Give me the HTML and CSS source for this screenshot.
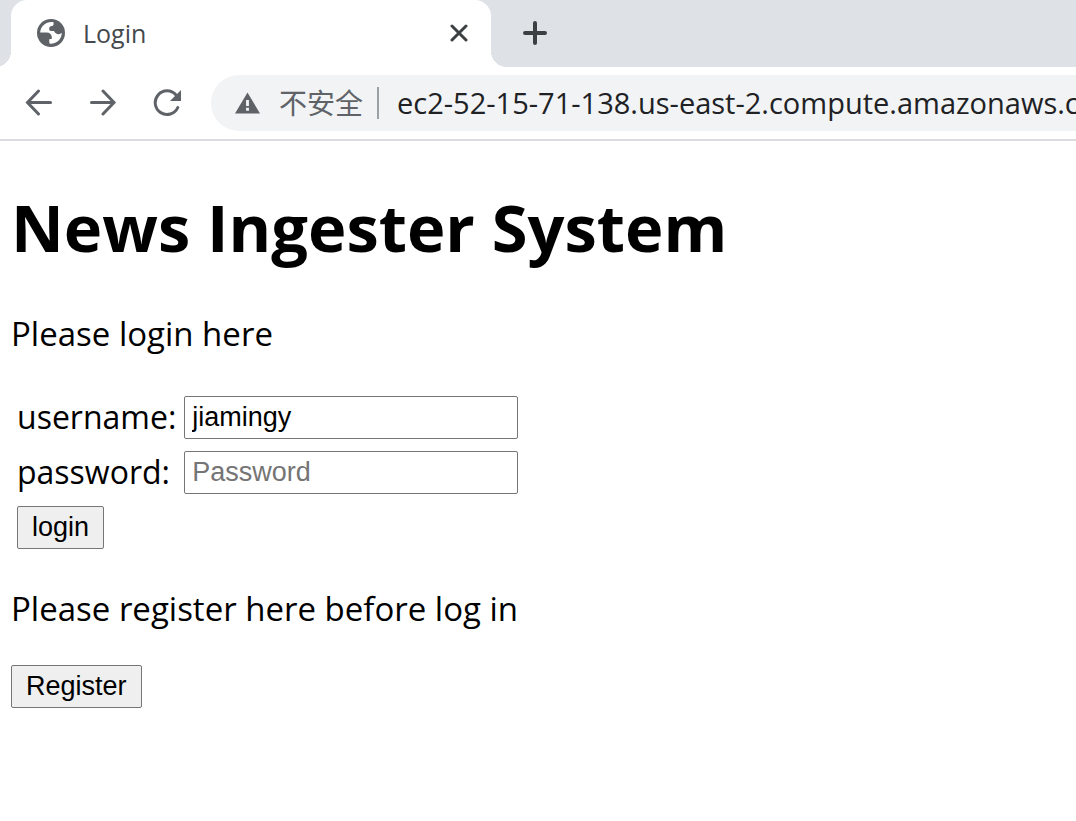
FILE: index.html
```html
<!DOCTYPE html>
<html lang="en">
<head>
<meta charset="utf-8">
<title>Login</title>
<link rel="stylesheet" href="styles.css">
</head>
<body>
<header class="browser">
  <div class="tab-strip">
    <div class="tab">
      <svg class="globe" viewBox="0 0 28 28" aria-hidden="true"><circle cx="14" cy="14" r="14" fill="#5f6368"/><path fill="#fff" d="M16.500 3.200C10 2 3.500 6.500 3.200 13.500H9.500c3.500 0 5.300 2 5.300 5v1.500h-2.300c-.6 2-.2 3.400.3 4.800 7 .5 12-5 12-11-1 1.300-2.800 1.700-4.500 1.200-1.800-.5-2.600-1.600-3.300-3h-3c-1.500 0-2-1-1.800-2.400.1-1.600.8-2.600 2.800-2.600 1.500 0 1.800-1.500 1.500-3.800z"/></svg>
      <span class="tab-title">Login</span>
      <button class="icon-button" aria-label="Close tab"><svg class="close" viewBox="0 0 18 18"><path d="M2 2l14 14M16 2L2 16"/></svg></button>
    </div>
    <button class="icon-button new-tab" aria-label="New tab"><svg class="plus" viewBox="0 0 24 24"><path d="M12 2v20M2 12h20"/></svg></button>
  </div>
  <div class="toolbar">
    <nav class="nav">
      <button class="icon-button" aria-label="Back"><svg class="nav-icon" viewBox="0 0 28 28"><path d="M25.500 13.500H3M13.500 2L2.500 13.500 13.500 25"/></svg></button>
      <button class="icon-button" aria-label="Forward"><svg class="nav-icon" viewBox="0 0 28 28"><path d="M2.500 13.500h22M14 2l11 11.500L14 25"/></svg></button>
      <button class="icon-button" aria-label="Reload"><svg class="nav-icon" viewBox="0 0 28 28"><path d="M23 6A11.800 11.800 0 1 0 24.800 18.500"/><path class="solid" d="M28 1v11H17z"/></svg></button>
    </nav>
    <div class="address">
      <svg class="warning" viewBox="0 0 26 22" aria-hidden="true"><path fill="#5f6368" d="M13 0l13 22H0z"/><path fill="#f1f3f4" d="M11.500 8h3v6h-3zM11.500 16h3v3h-3z"/></svg>
      <span class="security">不安全</span>
      <span class="divider"></span>
      <span class="url">ec2-52-15-71-138.us-east-2.compute.amazonaws.com</span>
    </div>
  </div>
</header>
<main class="page">
  <h1 class="heading">News Ingester System</h1>
  <p class="text">Please login here</p>
  <form class="login">
    <label class="label" for="username">username:</label>
    <input class="field" id="username" type="text" value="jiamingy">
    <label class="label" for="password">password:</label>
    <input class="field" id="password" type="password" placeholder="Password">
    <button class="button" type="button">login</button>
  </form>
  <p class="text">Please register here before log in</p>
  <button class="button" type="button">Register</button>
</main>
</body>
</html>
```
FILE: styles.css
```css
* { box-sizing: border-box; }

body {
  margin: 0;
  background: #fff;
  color: #000;
  font-family: "Open Sans", "Noto Sans CJK SC", sans-serif;
}

.browser {
  border-bottom: 2px solid #dadce0;
  overflow: hidden;
}

.tab-strip {
  display: flex;
  height: 67px;
  padding-left: 11px;
  background: #dee1e6;
}

.tab {
  position: relative;
  display: flex;
  align-items: center;
  width: 480px;
  padding: 0 23px 2px 26px;
  border-radius: 16px 16px 0 0;
  background: #fff;
}

.tab::before,
.tab::after {
  content: "";
  position: absolute;
  bottom: 0;
  width: 16px;
  height: 16px;
}

.tab::before {
  right: 100%;
  background: radial-gradient(circle at 0 0, transparent 16px, #fff 16px);
}

.tab::after {
  left: 100%;
  background: radial-gradient(circle at 100% 0, transparent 16px, #fff 16px);
}

.globe {
  width: 28px;
  height: 28px;
}

.tab-title {
  flex: 1;
  margin-left: 18px;
  color: #45494d;
  font-size: 25px;
}

.icon-button {
  display: flex;
  align-items: center;
  padding: 0;
  border: 0;
  background: none;
}

.icon-button svg {
  fill: none;
  stroke: #5f6368;
  stroke-width: 3;
  stroke-linecap: round;
}

.icon-button .close {
  width: 18px;
  height: 18px;
  stroke: #3c4043;
}

.new-tab {
  margin-left: 32px;
  padding-bottom: 2px;
}

.icon-button .plus {
  width: 24px;
  height: 24px;
  stroke: #3c4043;
  stroke-width: 4;
}

.toolbar {
  display: flex;
  align-items: center;
  padding: 8px 0 8px 25px;
}

.nav {
  display: flex;
  gap: 36px;
  margin-right: 30px;
}

.nav-icon {
  width: 28px;
  height: 28px;
}

.icon-button .solid {
  fill: #5f6368;
  stroke: none;
}

.address {
  display: flex;
  flex: 1;
  align-items: center;
  min-width: 0;
  height: 56px;
  padding-left: 24px;
  overflow: hidden;
  border-radius: 28px 0 0 28px;
  background: #f1f3f4;
  font-size: 28px;
  white-space: nowrap;
}

.warning {
  flex: none;
  width: 25px;
  height: 22px;
}

.security,
.url {
  padding-bottom: 2px;
}

.security {
  margin-left: 19px;
  color: #5f6368;
}

.divider {
  flex: none;
  width: 2px;
  height: 32px;
  margin: 0 18px 0 14px;
  background: #9aa0a6;
}

.url {
  color: #202124;
  font-size: 29px;
}

.page {
  padding: 42px 11px;
}

.heading {
  margin: 0 0 41px;
  font-size: 65px;
  font-weight: 700;
  line-height: 88px;
}

.text {
  margin: 0 0 34px;
  font-size: 33px;
  line-height: 44px;
}

.login {
  display: grid;
  grid-template-columns: max-content 334px;
  gap: 12px 8px;
  justify-items: start;
  padding: 6px;
  margin: 0 0 32px;
}

.label {
  font-size: 32px;
  line-height: 42px;
}

.field,
.button {
  height: 43px;
  border: 1px solid #767676;
  border-radius: 2px;
  font-family: "Liberation Sans", Arial, sans-serif;
  font-size: 27px;
}

.field {
  width: 100%;
  padding: 0 7px;
  background: #fff;
  color: #000;
}

.field::placeholder {
  color: #757575;
}

.button {
  padding: 0 14px;
  background: #efefef;
  color: #000;
}
```
